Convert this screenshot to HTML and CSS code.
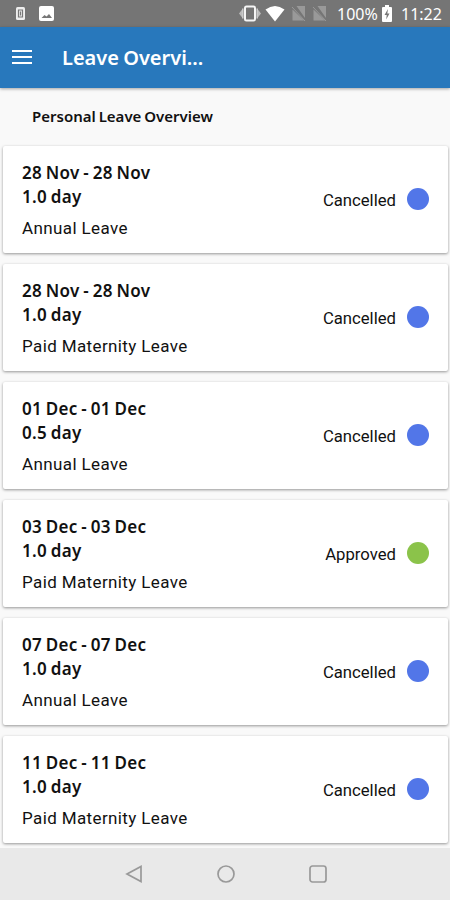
FILE: index.html
```html
<!DOCTYPE html>
<html lang="en">
<head>
  <meta charset="UTF-8">
  <meta name="viewport" content="width=device-width, initial-scale=1.0">
  <title>Leave Overview</title>
  <link rel="stylesheet" href="styles.css">
</head>
<body>
  <div class="status-bar">
    <svg class="notifications" width="60" height="27" viewBox="0 0 60 27">
      <rect x="16" y="7" width="9" height="13" rx="1.5" fill="#eee"/>
      <path d="M18.5 10h4v7h-4zM20.5 11.500v4" fill="none" stroke="#777" stroke-width="1.200"/>
      <rect x="39" y="6" width="15" height="15" rx="2" fill="#fff"/>
      <path d="M41.500 18l3-3 2 1.500 2.500-2.500 3 4z" fill="#777"/>
    </svg>
    <svg class="signals" width="90" height="27" viewBox="0 0 90 27">
      <path d="M3.500 9L0 13.500 3.500 18zM18.500 9l3.500 4.500-3.500 4.500z" fill="#bbb"/>
      <rect x="6" y="6.500" width="10" height="14" rx="1.500" fill="none" stroke="#f5f5f5" stroke-width="2"/>
      <path d="M3.800 8.500v10M18.200 8.500v10" stroke="#ccc" stroke-width="1.500"/>
      <path d="M26.500 9.500Q36 2.500 45.500 9.500L36 21.500z" fill="#fff"/>
      <path d="M57.500 6H66v12zM53.500 9.500v11H65zM78.500 6H87v12zM74.500 9.500v11H86z" fill="#999"/>
      <path d="M53 7l13 14M74 7l13 14" stroke="#999" stroke-width="1"/>
    </svg>
    <span class="battery-level">100%</span>
    <svg class="battery" width="10" height="17" viewBox="0 0 10 17">
      <path d="M3 0h4v2h2q1 0 1 1v13q0 1-1 1H1q-1 0-1-1V3q0-1 1-1h2z" fill="#fff"/>
      <path d="M6 4L2.500 10h2.200L4.200 14.500 7.500 8.500H5.300z" fill="#777"/>
    </svg>
    <span class="clock">11:22</span>
  </div>

  <header class="app-bar">
    <button class="menu-btn" aria-label="Menu">
      <span></span>
      <span></span>
      <span></span>
    </button>
    <h1>Leave Overvi...</h1>
  </header>

  <main>
    <h2>Personal Leave Overview</h2>
    <div class="leave-list">
      <div class="card">
        <div class="info">
          <p class="dates">28 Nov - 28 Nov</p>
          <p class="days">1.0 day</p>
          <p class="type">Annual Leave</p>
        </div>
        <span class="status">Cancelled</span>
        <span class="dot"></span>
      </div>
      <div class="card">
        <div class="info">
          <p class="dates">28 Nov - 28 Nov</p>
          <p class="days">1.0 day</p>
          <p class="type">Paid Maternity Leave</p>
        </div>
        <span class="status">Cancelled</span>
        <span class="dot"></span>
      </div>
      <div class="card">
        <div class="info">
          <p class="dates">01 Dec - 01 Dec</p>
          <p class="days">0.5 day</p>
          <p class="type">Annual Leave</p>
        </div>
        <span class="status">Cancelled</span>
        <span class="dot"></span>
      </div>
      <div class="card">
        <div class="info">
          <p class="dates">03 Dec - 03 Dec</p>
          <p class="days">1.0 day</p>
          <p class="type">Paid Maternity Leave</p>
        </div>
        <span class="status">Approved</span>
        <span class="dot approved"></span>
      </div>
      <div class="card">
        <div class="info">
          <p class="dates">07 Dec - 07 Dec</p>
          <p class="days">1.0 day</p>
          <p class="type">Annual Leave</p>
        </div>
        <span class="status">Cancelled</span>
        <span class="dot"></span>
      </div>
      <div class="card">
        <div class="info">
          <p class="dates">11 Dec - 11 Dec</p>
          <p class="days">1.0 day</p>
          <p class="type">Paid Maternity Leave</p>
        </div>
        <span class="status">Cancelled</span>
        <span class="dot"></span>
      </div>
    </div>
  </main>

  <nav class="nav-bar">
    <svg width="18" height="18" viewBox="0 0 18 18"><path d="M16 1.500v15L2 9z"/></svg>
    <svg width="18" height="18" viewBox="0 0 18 18"><circle cx="9" cy="9" r="8"/></svg>
    <svg width="18" height="18" viewBox="0 0 18 18"><rect x="1" y="1" width="16" height="16" rx="2.500"/></svg>
  </nav>
</body>
</html>
```

FILE: styles.css
```css
* { margin: 0; padding: 0; box-sizing: border-box; }
html, body { height: 100%; overflow: hidden; }
body {
  display: flex;
  flex-direction: column;
  background: #f9f9f9;
  color: #111;
  font-family: Roboto, sans-serif;
}

.status-bar { flex: none; display: flex; align-items: center; height: 27px; background: #757575; color: #fff; }
.signals { margin-left: auto; }
.battery-level, .clock { font-family: "Noto Sans", sans-serif; font-size: 16px; line-height: 28px; }
.battery-level { width: 41px; margin-left: 8px; white-space: nowrap; }
.battery { margin-left: 4px; }
.clock { width: 49px; margin-left: 9px; white-space: nowrap; }

.app-bar {
  flex: none; display: flex; align-items: center; gap: 30px;
  height: 61px; padding-left: 12px;
  background: #2878bc; color: #fff;
  box-shadow: 0 1px 3px rgba(0, 0, 0, 0.35);
  z-index: 2;
}
.menu-btn { display: flex; flex-direction: column; gap: 4px; width: 20px; padding-bottom: 1px; border: none; background: none; }
.menu-btn span { height: 2px; background: #fff; }
.app-bar h1 { font: 600 20px/28px "Noto Sans", sans-serif; letter-spacing: 0; word-spacing: -1px; }

main { flex: 1; min-height: 0; overflow: hidden; }
h2 { height: 58px; padding-left: 32px; font: 600 15px/57px "Noto Sans", sans-serif; letter-spacing: 0; word-spacing: -1px; }
.leave-list { display: flex; flex-direction: column; gap: 11px; padding: 0 2px 0 3px; }
.card {
  display: flex; align-items: center;
  height: 107px; padding: 0 19px;
  background: #fff;
  border-radius: 2px;
  box-shadow: 0 1px 3px rgba(0, 0, 0, 0.4);
}
.info { flex: 1; }
.dates, .days { font: 600 17px/24px "Noto Sans", sans-serif; letter-spacing: 0.3px; word-spacing: -1px; }
.dates { padding-top: 1px; }
.type { margin-top: 7px; font-size: 17px; line-height: 24px; letter-spacing: 0.38px; }
.status { padding-top: 1px; font-size: 16.7px; }
.dot { width: 22px; height: 22px; margin: 0 0 1px 11px; border-radius: 50%; background: #5276e8; }
.dot.approved { background: #8bc34a; }

.nav-bar {
  flex: none; display: flex; justify-content: center; align-items: center; gap: 74px;
  height: 52px; padding-left: 1px;
  background: #e9e9e9;
}
.nav-bar svg { fill: none; stroke: #999; stroke-width: 1.7; }
```
